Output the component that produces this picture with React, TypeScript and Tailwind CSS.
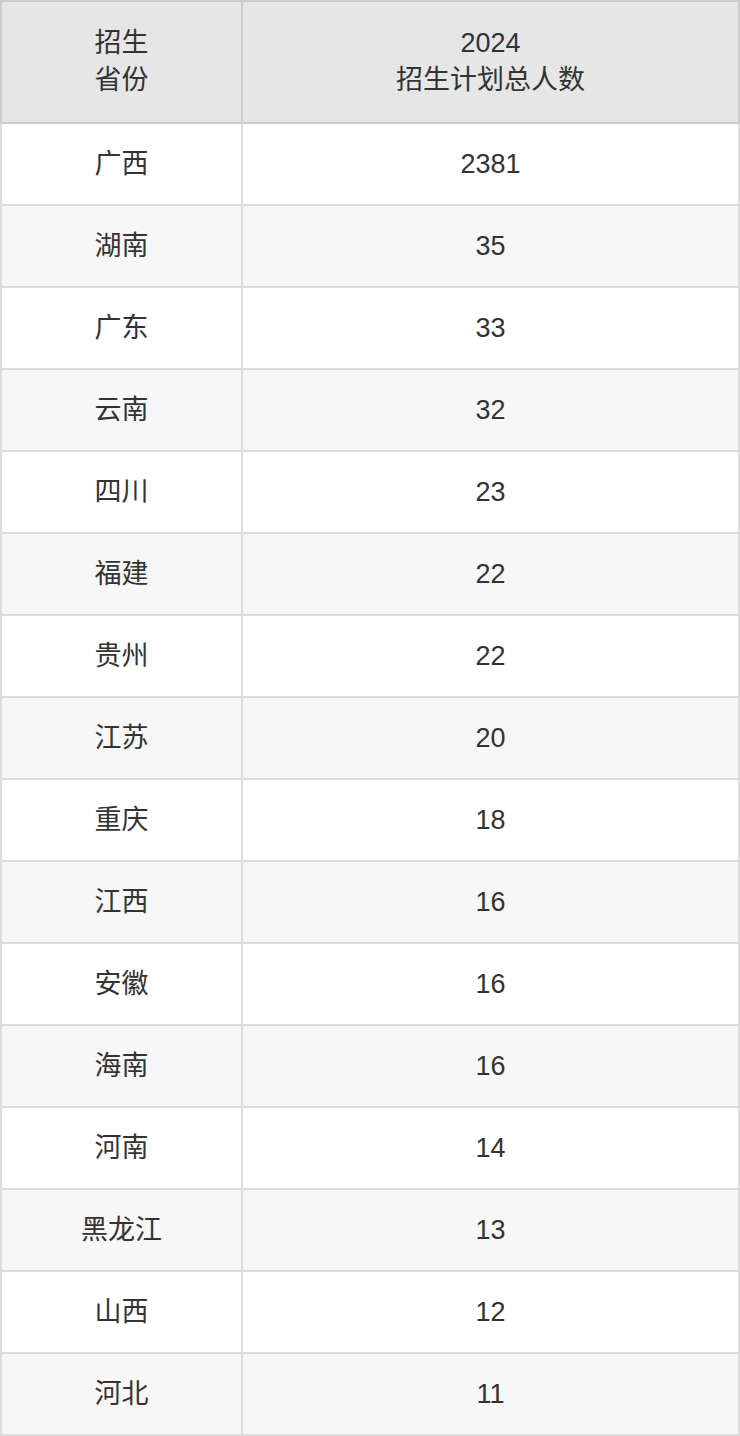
const rows: [string, number][] = [
  ['广西', 2381],
  ['湖南', 35],
  ['广东', 33],
  ['云南', 32],
  ['四川', 23],
  ['福建', 22],
  ['贵州', 22],
  ['江苏', 20],
  ['重庆', 18],
  ['江西', 16],
  ['安徽', 16],
  ['海南', 16],
  ['河南', 14],
  ['黑龙江', 13],
  ['山西', 12],
  ['河北', 11],
];

export default function App() {
  return (
    <div className="w-[740px] bg-white font-['Liberation_Sans','Noto_Sans_CJK_SC',sans-serif] text-[27px] text-[#333]">
      <table className="w-full table-fixed border-collapse">
        <colgroup>
          <col className="w-[241px]" />
          <col />
        </colgroup>
        <thead>
          <tr className="h-[122px] bg-[#e6e6e6]">
            <th className="border-2 border-[#cccccc] font-normal leading-[37px] text-center align-middle">
              招生
              <br />
              省份
            </th>
            <th className="border-2 border-[#cccccc] font-normal leading-[37px] text-center align-middle">
              2024
              <br />
              招生计划总人数
            </th>
          </tr>
        </thead>
        <tbody>
          {rows.map(([province, count], i) => (
            <tr key={province} className={`h-[82px] ${i % 2 === 1 ? 'bg-[#f7f7f7]' : 'bg-white'}`}>
              <td className="border-2 border-[#dddddd] text-center align-middle leading-[38px]">{province}</td>
              <td className="border-2 border-[#dddddd] text-center align-middle leading-[38px]">{count}</td>
            </tr>
          ))}
        </tbody>
      </table>
    </div>
  );
}
